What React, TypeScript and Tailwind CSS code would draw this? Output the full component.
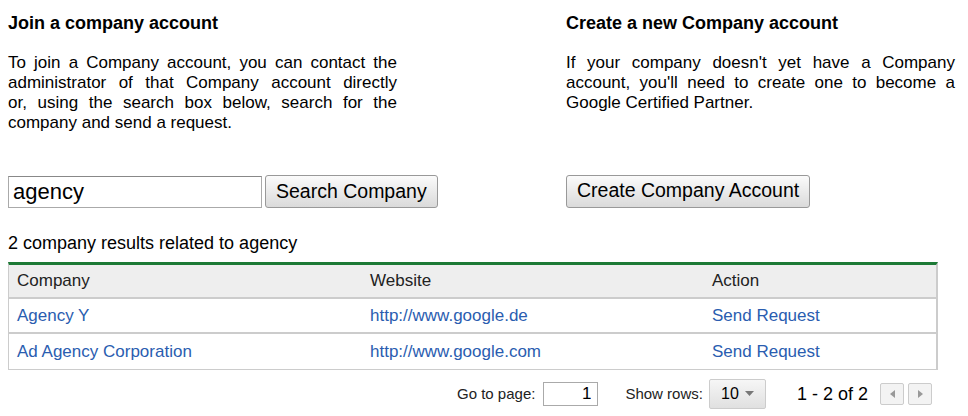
export default function App() {
  const rows = [
    { name: 'Agency Y', site: 'http://www.google.de' },
    { name: 'Ad Agency Corporation', site: 'http://www.google.com' },
  ];

  const joinLines = [
    'To join a Company account, you can contact the',
    'administrator of that Company account directly',
    'or, using the search box below, search for the',
    'company and send a request.',
  ];

  const btn =
    'h-[33px] px-[10px] whitespace-nowrap border border-[#999] rounded-[3px] bg-gradient-to-b from-[#fbfbfb] to-[#dadada] text-[19.5px] leading-none text-black';

  return (
    <div className="w-[968px] h-[416px] bg-white text-[#222] font-['Liberation_Sans',Arial,sans-serif] overflow-hidden">
      <div className="flex pl-2 pt-[13px] gap-[169px]">
        <div className="w-[389px]">
          <h2 className="text-[18px] font-bold leading-[20px] text-black">Join a company account</h2>
          <div className="mt-[20px] h-[80px] text-[17px] leading-[20px] text-black">
            {joinLines.map((line, i) => (
              <div
                key={line}
                className={i < joinLines.length - 1 ? 'text-justify [text-align-last:justify]' : ''}
              >
                {line}
              </div>
            ))}
          </div>
          <div className="mt-[42px] flex items-center gap-[3px]">
            <input
              defaultValue="agency"
              className="w-[254px] h-[32px] border border-[#aaa] border-t-[#888] px-[4px] text-[22px] text-black outline-none"
            />
            <button className={btn}>Search Company</button>
          </div>
        </div>
        <div className="w-[389px]">
          <h2 className="text-[18px] font-bold leading-[20px] text-black">Create a new Company account</h2>
          <p className="mt-[20px] h-[80px] text-[17px] leading-[20px] text-justify text-black">
            If your company doesn't yet have a Company account, you'll need to create one to become a Google Certified
            Partner.
          </p>
          <div className="mt-[42px] flex items-center h-[32px]">
            <button className={btn}>Create Company Account</button>
          </div>
        </div>
      </div>

      <div className="pl-2 mt-[25px] text-[18px] leading-[20px] text-black">2 company results related to agency</div>

      <div className="ml-2 mt-[9px] w-[930px] border-t-[3px] border-t-[#1d7a36] border-l border-b border-r-2 border-[#ccc]">
        <div className="grid grid-cols-[353px_342px_1fr] h-[34px] items-center bg-[#eee] border-b-2 border-[#ccc] text-[17px] text-[#222] pl-2">
          <div>Company</div>
          <div>Website</div>
          <div>Action</div>
        </div>
        {rows.map((r, i) => (
          <div
            key={r.name}
            className={`grid grid-cols-[353px_342px_1fr] h-[35px] items-center text-[17px] text-[#2a5db0] pl-2 ${
              i === 0 ? 'border-b-2 border-[#ccc]' : ''
            }`}
          >
            <div>{r.name}</div>
            <div>{r.site}</div>
            <div>Send Request</div>
          </div>
        ))}
      </div>

      <div className="mt-[9px] flex items-center justify-end pr-[36px] text-[15px] text-[#222]">
        <span>Go to page:</span>
        <input
          defaultValue="1"
          className="ml-[8px] w-[55px] h-[24px] border border-[#aaa] text-right px-[6px] text-[17px] text-black outline-none"
        />
        <span className="ml-[27px]">Show rows:</span>
        <div className="ml-[6px] w-[57px] h-[30px] border border-[#ccc] rounded-[2px] bg-gradient-to-b from-[#f6f6f6] to-[#e0e0e0] flex items-center justify-center gap-[6px] text-[16px] text-black">
          <span>10</span>
          <svg width="9" height="6" viewBox="0 0 9 6">
            <path d="M0 0h9L4.5 5z" fill="#777" />
          </svg>
        </div>
        <span className="ml-[31px] text-[18px] text-black">1 - 2 of 2</span>
        <div className="ml-[12px] flex gap-[4px]">
          <div className="w-[24px] h-[22px] border border-[#ccc] rounded-[2px] bg-[#f3f3f3] flex items-center justify-center">
            <svg width="5" height="8" viewBox="0 0 5 8">
              <path d="M5 0v8L0 4z" fill="#999" />
            </svg>
          </div>
          <div className="w-[24px] h-[22px] border border-[#ccc] rounded-[2px] bg-[#f3f3f3] flex items-center justify-center">
            <svg width="5" height="8" viewBox="0 0 5 8">
              <path d="M0 0v8l5-4z" fill="#999" />
            </svg>
          </div>
        </div>
      </div>
    </div>
  );
}
